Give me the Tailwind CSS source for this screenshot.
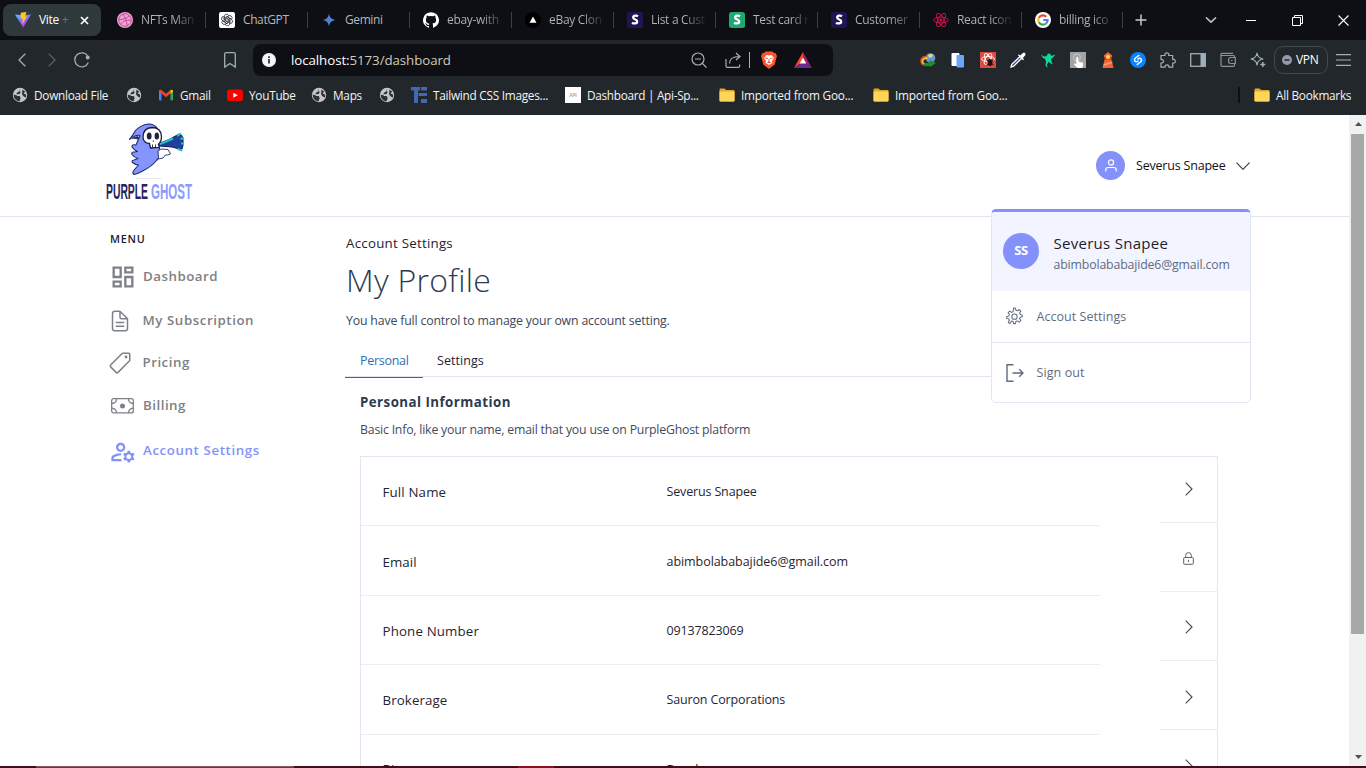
<!DOCTYPE html>
<html lang="en">
<head>
<meta charset="utf-8">
<title>Account Settings - Purple Ghost</title>
<script src="https://cdn.jsdelivr.net/npm/@tailwindcss/browser@4"></script>
</head>
<body class="h-[768px] w-[1366px] overflow-hidden bg-white font-['Open_Sans',sans-serif] text-black">
<svg class="hidden">
  <symbol id="globe" viewBox="0 0 16 16"><circle cx="8" cy="8" r="7.2" fill="#c3c7cb"/><path d="M8.300 1.500L7 3.800l1.800 1.200-1.200 2-3.300.3.400 1.600 3 .2 1 2.200-1.300 3.200C3.600 13.600 1.600 10.800 1.700 7.500L4 8.300l1-2.500 2.300-1.500zM10.500 2.500l2.800 2.300-1.800 1.400 2.700 1.600-.2 2.600-2.300-.9-1.700-2.300z" fill="#2b3135"/></symbol>
  <symbol id="folder" viewBox="0 0 16 16"><path d="M.5 2.700Q.5 1.500 1.700 1.500H5.500L7 3h7.500q1 0 1 1V13.500q0 1-1 1h-13q-1 0-1-1z" fill="#e3a92c"/><path d="M.5 4.500h15v9q0 1-1 1h-13q-1 0-1-1z" fill="#ffd659"/></symbol>
  <symbol id="stripe" viewBox="0 0 16 16"><rect width="16" height="16" rx="2.500" fill="currentColor"/><path d="M11 4.200C9.800 3.500 6.200 3.200 6.200 5.500c0 2.400 4 1.700 4 3.900 0 2.600-3.800 2.200-5.200 1.300" fill="none" stroke="#fff" stroke-width="2.300"/></symbol>
  <symbol id="chev" viewBox="0 0 8 14"><path d="M.7.700L7 7 .7 13.300" fill="none" stroke="#454b57" stroke-width="1.150"/></symbol>
</svg>

<!-- Tab strip -->
<div class="flex h-10 items-center bg-[#0e0f14] text-[12px] leading-4 tracking-[-0.3px] text-[#b4b7ba]">
  <div class="ml-[3px] flex h-8 w-[98px] items-center rounded-lg bg-[#2f383b] pl-3 text-white">
    <svg class="size-4 shrink-0" viewBox="0 0 16 16"><defs><linearGradient id="v1" x1="0" y1="0" x2=".6" y2="1"><stop offset="0" stop-color="#41d1ff"/><stop offset=".5" stop-color="#8a6cff"/><stop offset="1" stop-color="#bd34fe"/></linearGradient></defs><path d="M0 2.500l7.200.8L16 2.500 8.200 15.500z" fill="url(#v1)"/><path d="M5.800.8L11.500 0 10 4.500h2L7.500 12V6.500H5.500z" fill="#ffc81f"/></svg>
    <span class="ml-2 w-[31px] whitespace-nowrap">Vite <span class="text-[#687276]">+</span></span>
    <svg class="ml-[10px] size-[9px]" viewBox="0 0 9 9"><path d="M1 1l7 7M8 1L1 8" stroke="#fff" stroke-width="1.700"/></svg>
  </div>
  <div class="ml-4 flex w-[89px] items-center border-r border-[#3a4145]"><svg class="size-4 shrink-0" viewBox="0 0 16 16"><circle cx="8" cy="8" r="8" fill="#f2a1d4"/><g fill="none" stroke="#b4478c" stroke-width=".9"><circle cx="8" cy="8" r="6.300"/><path d="M2 7.500C6 7.500 10 6.500 12.500 3.700M5.800 2.200C8.500 5.500 9.500 9 10.200 13.800M3.800 12.500C5.500 9 9 7.500 14 8.500"/></g></svg><span class="ml-2 w-[56px] bg-gradient-to-r from-[#b4b7ba] from-60% to-[#14161b] bg-clip-text whitespace-nowrap text-transparent">NFTs Man</span></div>
  <div class="ml-[13px] flex w-[89px] items-center border-r border-[#3a4145]"><svg class="size-4 shrink-0" viewBox="0 0 16 16"><rect width="16" height="16" rx="2" fill="#fff"/><g fill="none" stroke="#222" stroke-width=".75"><path id="gp" d="M5.200 8.300V4.700A2.400 2.400 0 0 1 9.500 3.200M6.700 8.800V5.500L9.900 3.700"/><use href="#gp" transform="rotate(60 8 8)"/><use href="#gp" transform="rotate(120 8 8)"/><use href="#gp" transform="rotate(180 8 8)"/><use href="#gp" transform="rotate(240 8 8)"/><use href="#gp" transform="rotate(300 8 8)"/></g></svg><span class="ml-2 tracking-[-0.4px]">ChatGPT</span></div>
  <div class="ml-[13px] flex w-[89px] items-center border-r border-[#3a4145]"><svg class="size-4 shrink-0" viewBox="0 0 16 16"><defs><linearGradient id="gm"><stop offset=".1" stop-color="#8a6aa8"/><stop offset=".5" stop-color="#4a7fdc"/><stop offset="1" stop-color="#3aa0f5"/></linearGradient></defs><path d="M8 1.500C8.600 5.500 10.500 7.400 14.500 8 10.500 8.600 8.600 10.500 8 14.500 7.400 10.500 5.500 8.600 1.500 8 5.500 7.400 7.400 5.500 8 1.500z" fill="url(#gm)"/></svg><span class="ml-2 tracking-[-0.4px]">Gemini</span></div>
  <div class="ml-[13px] flex w-[89px] items-center border-r border-[#3a4145]"><svg class="size-4 shrink-0" viewBox="0 0 16 16"><path fill="#fff" d="M8 .2a8 8 0 0 0-2.500 15.600c.4.100.5-.2.500-.4v-1.400c-2.200.5-2.700-1-2.700-1-.4-.9-.9-1.200-.9-1.200-.7-.5.1-.5.1-.5.800.1 1.200.800 1.200.800.700 1.200 1.900.9 2.300.7.100-.5.300-.9.500-1.100-1.800-.2-3.600-.9-3.600-3.900 0-.9.3-1.600.8-2.200-.1-.2-.4-1 .1-2.100 0 0 .7-.2 2.200.8a7.700 7.700 0 0 1 4 0c1.500-1 2.200-.8 2.200-.8.400 1.100.2 1.900.1 2.100.5.600.8 1.300.8 2.200 0 3-1.900 3.700-3.700 3.900.3.300.6.800.6 1.500v2.200c0 .2.100.5.500.4A8 8 0 0 0 8 .2z"/></svg><span class="ml-2 w-[56px] bg-gradient-to-r from-[#b4b7ba] from-60% to-[#2a2c30] bg-clip-text whitespace-nowrap text-transparent">ebay-with</span></div>
  <div class="ml-[13px] flex w-[89px] items-center border-r border-[#3a4145]"><svg class="size-4 shrink-0" viewBox="0 0 16 16"><circle cx="8" cy="8" r="8" fill="#000"/><path d="M8 4.500l3.500 6.300h-7z" fill="#fff"/></svg><span class="ml-2 w-[56px] bg-gradient-to-r from-[#b4b7ba] from-60% to-[#14161b] bg-clip-text whitespace-nowrap text-transparent">eBay Clon</span></div>
  <div class="ml-[13px] flex w-[89px] items-center border-r border-[#3a4145]"><svg class="size-4 shrink-0 text-[#211551]"><use href="#stripe"/></svg><span class="ml-2 w-[56px] bg-gradient-to-r from-[#b4b7ba] from-60% to-[#14161b] bg-clip-text whitespace-nowrap text-transparent">List a Cust</span></div>
  <div class="ml-[13px] flex w-[89px] items-center border-r border-[#3a4145]"><svg class="size-4 shrink-0 text-[#21a772]"><use href="#stripe"/></svg><span class="ml-2 w-[56px] bg-gradient-to-r from-[#b4b7ba] from-70% to-[#14161b] bg-clip-text whitespace-nowrap text-transparent">Test card r</span></div>
  <div class="ml-[13px] flex w-[89px] items-center border-r border-[#3a4145]"><svg class="size-4 shrink-0 text-[#211551]"><use href="#stripe"/></svg><span class="ml-2 w-[56px] bg-gradient-to-r from-[#b4b7ba] from-60% to-[#3a3c40] bg-clip-text whitespace-nowrap text-transparent">Customer</span></div>
  <div class="ml-[13px] flex w-[89px] items-center border-r border-[#3a4145]"><svg class="size-4 shrink-0" viewBox="0 0 16 16"><g fill="none" stroke="#d0124f" stroke-width=".9"><ellipse cx="8" cy="8" rx="7.300" ry="2.900"/><ellipse cx="8" cy="8" rx="7.300" ry="2.900" transform="rotate(60 8 8)"/><ellipse cx="8" cy="8" rx="7.300" ry="2.900" transform="rotate(120 8 8)"/></g><circle cx="8" cy="8" r="1.500" fill="#d0124f"/></svg><span class="ml-2 w-[56px] bg-gradient-to-r from-[#b4b7ba] from-60% to-[#14161b] bg-clip-text whitespace-nowrap text-transparent">React icon</span></div>
  <div class="ml-[13px] flex w-[88px] items-center border-r border-[#3a4145]"><svg class="size-4 shrink-0" viewBox="0 0 16 16"><circle cx="8" cy="8" r="8" fill="#fff"/><g fill="none" stroke-width="2.200"><path d="M11.300 4.700A4.700 4.700 0 0 0 3.900 5.700" stroke="#ea4335"/><path d="M3.900 5.700a4.700 4.700 0 0 0 0 4.600" stroke="#fbbc05"/><path d="M3.900 10.300a4.700 4.700 0 0 0 7.200 1.200" stroke="#34a853"/><path d="M8.200 8H12.600a4.700 4.700 0 0 1-1.500 3.500" stroke="#4285f4"/></g></svg><span class="ml-2 w-[56px] bg-gradient-to-r from-[#b4b7ba] from-60% to-[#14161b] bg-clip-text whitespace-nowrap text-transparent">billing ico</span></div>
  <svg class="ml-[12px] size-3" viewBox="0 0 12 12"><path d="M6 .5v11M.5 6h11" stroke="#c7c9cb" stroke-width="1.500"/></svg>
  <svg class="ml-[58px] h-[6px] w-[12px]" viewBox="0 0 12 6"><path d="M1 .5l5 4.700 5-4.700" fill="none" stroke="#b7c4cb" stroke-width="1.600"/></svg>
  <div class="ml-[29px] h-px w-[10px] bg-white"></div>
  <svg class="ml-[36px] size-[11px]" viewBox="0 0 11 11"><path d="M.5 2.500h8v8h-8zM2.500 2.500v-2h8v8h-2" fill="none" stroke="#fff"/></svg>
  <svg class="ml-[35px] size-[11px]" viewBox="0 0 11 11"><path d="M.5.500l10 10M10.500.500l-10 10" stroke="#fff" stroke-width="1.100"/></svg>
</div>

<!-- Toolbar -->
<div class="flex h-10 items-center bg-[#22272b]">
  <svg class="ml-[18px] h-[14px] w-2" viewBox="0 0 8 14"><path d="M7.300.700L1 7l6.300 6.300" fill="none" stroke="#9fb0b8" stroke-width="1.300"/></svg>
  <svg class="ml-[22px] h-[14px] w-2" viewBox="0 0 8 14"><path d="M.7.700L7 7 .7 13.300" fill="none" stroke="#566167" stroke-width="1.300"/></svg>
  <svg class="ml-[18px] size-4" viewBox="0 0 16 16"><path d="M14.300 10.500A7 7 0 1 1 14 4.500" fill="none" stroke="#9fb0b8" stroke-width="1.300"/><circle cx="13.700" cy="5.500" r="2" fill="#9fb0b8"/></svg>
  <svg class="ml-[134px] h-4 w-3" viewBox="0 0 12 16"><path d="M.7 2.200Q.7.700 2.200.700h7.600q1.500 0 1.500 1.500v12.900L6 11.500.7 15.100z" fill="none" stroke="#9fb0b8" stroke-width="1.300"/></svg>
  <div class="ml-[17px] flex h-8 w-[580px] items-center rounded-lg bg-[#0e0f14] pl-[9px]">
    <svg class="size-[14px]" viewBox="0 0 14 14"><circle cx="7" cy="7" r="7" fill="#f4f5f6"/><path d="M7 6v4.500M7 3.300v1.600" stroke="#1b1d21" stroke-width="1.600"/></svg>
    <span class="ml-[15px] w-[390px] pt-[2px] text-[13.3px] tracking-[-0.07px] text-[#d0c9b8]"><span class="text-white">localhost:</span>5173/dashboard</span>
    <svg class="ml-[10px] size-4" viewBox="0 0 16 16"><g fill="none" stroke="#a9b0b4" stroke-width="1.200"><circle cx="7" cy="7" r="6"/><path d="M4 7h6M11.300 11.300L15.500 15.500"/></g></svg>
    <svg class="ml-[18px] size-4" viewBox="0 0 16 16"><g fill="none" stroke="#a9b0b4" stroke-width="1.200"><path d="M1 7v7q0 1.300 1.300 1.300h11q1.300 0 1.300-1.300v-1.500M4.500 11.500C4.500 6.500 8 4.500 14.500 4.500M11 1l4 3.500L11 8"/></g></svg>
    <div class="ml-2 h-4 w-px bg-[#a9b0b4]"></div>
    <svg class="ml-[11px] h-[18px] w-4" viewBox="0 0 16 18"><path d="M4.500.500h7L13 2h1.500L16 5l-.5 1.500-1.800 7L8 18l-5.700-4.500-1.800-7L0 5l1.500-3H3z" fill="#fb542b"/><path d="M8 4.500L5.500 4 3 7l2 3-.3 2L8 14l3.300-2-.3-2 2-3-2.500-3z" fill="#fff"/><path d="M4.500 7l2.300.7M11.500 7l-2.300.7M8 8v2.800M6.300 11.800L8 10.800l1.700 1" stroke="#fb542b" stroke-width="1"/></svg>
    <svg class="ml-[17px] h-[16px] w-[18px]" viewBox="0 0 18 16"><path d="M9 0L0 16l9-6.500z" fill="#ff4724"/><path d="M9 0l9 16-9-6.500z" fill="#9e1f63"/><path d="M0 16h18L9 9.500z" fill="#662d91"/><path d="M9 5.500l3.300 6H5.700z" fill="#fff"/></svg>
  </div>
  <svg class="ml-[87px] size-4" viewBox="0 0 16 16"><circle cx="10.500" cy="6" r="4.800" fill="#6d93cf"/><path d="M8 3q3-2 5 0l-1 2-3 1z" fill="#cfdf8e"/><path d="M6.500 4.500Q1 4.500 1 9t5 4" stroke="#e8482c" stroke-width="1.600" fill="none"/><path d="M7.500 6Q3 6 2.500 9T7 12.500" stroke="#f2c81f" stroke-width="1.800" fill="none"/><path d="M3.500 13q3 2 6.500.800l-.5 1.700L16 11l-6.500-3 .5 2.300Q7 12 4.500 10.500z" fill="#1b8f22"/></svg>
  <svg class="ml-[14px] size-4" viewBox="0 0 16 16"><rect x="1.500" y="1" width="8" height="13" rx="1" fill="#fff"/><rect x="6.500" y="3" width="7.500" height="12.500" rx="1" fill="#6aa6f5"/></svg>
  <svg class="ml-[14px] size-4" viewBox="0 0 16 16"><rect width="16" height="16" fill="#dd4b3e"/><g fill="none" stroke="#fff" stroke-width=".9"><ellipse cx="8" cy="7" rx="6.500" ry="2.500"/><ellipse cx="8" cy="7" rx="6" ry="2.500" transform="rotate(60 8 7)"/><ellipse cx="8" cy="7" rx="6" ry="2.500" transform="rotate(120 8 7)"/></g><ellipse cx="10" cy="10.500" rx="2.500" ry="3.500" fill="#25100f"/><path d="M6.500 8l7 5M13.500 8l-7 5" stroke="#25100f"/></svg>
  <svg class="ml-[14px] size-4" viewBox="0 0 16 16"><path d="M10 4.500L1.800 12.300 1 15l2.700-.8L11.700 6.300" fill="#2f4d9e" stroke="#fff" stroke-width="1.300"/><path d="M8 3.200l5 5 1-1-1.200-1.300 2.500-2.600Q16 2 15 1t-2.300.2L10.200 3.500 9 2.300z" fill="#fff"/></svg>
  <svg class="ml-[14px] size-4" viewBox="0 0 16 16"><path d="M1 2.500l3 2 2.500-.2L8 1.500l2.500.5.500 2 4.300-1.500-2.800 3.700-1.500.3.500 3 1.500 3-2.500-1.300L8.500 10 7 12.500 7.500 16 5.500 13.500 6 9.500 5 6.700 3 6z" fill="#0fd8a0"/></svg>
  <svg class="ml-[14px] size-4" viewBox="0 0 16 16"><rect width="16" height="16" fill="#a3a3a3"/><circle cx="7" cy="5.500" r="3.500" fill="none" stroke="#c9c9c9"/><path d="M6.300 5.500q1-1.300 2 0v4l4.700 1.200V14l-1 2H7.500L4 12.500 4.500 11.300l1.800 1z" fill="#fff"/></svg>
  <svg class="ml-[14px] size-4" viewBox="0 0 16 16"><path d="M8 0l4 3.200V5H4V3.200zM4.500 8h7l2 8h-11z" fill="#f4623a"/><path d="M4.500 5h7v3h-7z" fill="#e04a26"/><circle cx="8" cy="5" r="2" fill="#ffe24b"/><path d="M3.700 12l8.500-2.500.3 1.500-9 3z" fill="#ff9a78"/></svg>
  <svg class="ml-[14px] size-4" viewBox="0 0 16 16"><circle cx="8" cy="8" r="8" fill="#0a84ff"/><path d="M8.800 3.500L5.500 6q-2 2 0 3.500 1.200.8 2.500-.5M7.200 12.500l3.300-2.500q2-2 0-3.500Q9.300 5.700 8 7" fill="none" stroke="#fff" stroke-width="1.500" stroke-linecap="round"/></svg>
  <svg class="ml-[14px] size-4" viewBox="0 0 16 16"><path d="M1 3.500h4Q4.500.800 6.800.800T8.700 3.500h4v4Q15.300 7 15.300 9.200t-2.600 1.900v4H9Q9 12.800 7 12.800t-2 2.300H1v-4q2.500 0 2.500-1.900T1 7.300z" fill="none" stroke="#9fb0b8" stroke-width="1.200"/></svg>
  <svg class="ml-[14px] size-4" viewBox="0 0 16 16"><rect x=".7" y="1.700" width="14.600" height="12.600" fill="none" stroke="#9fb0b8" stroke-width="1.300"/><path d="M10.500 2h4.500v12h-4.500z" fill="#9fb0b8"/></svg>
  <svg class="ml-[14px] size-4" viewBox="0 0 16 16"><path d="M14.500 5.500V4.500q0-1-1-1h-11q-1.500 0-1.500-1.200T2.500 1.300h10.500M1 2.500v10.500q0 1.300 1.300 1.300h11q1.200 0 1.200-1.300v-1.500M15.300 5.500H10.500q-2 0-2 3t2 3h4.800zM11 8.500h1.500" fill="none" stroke="#84959c" stroke-width="1.200"/></svg>
  <svg class="ml-[14px] size-4" viewBox="0 0 16 16"><path d="M7 1q.5 5 6 6-5.500 1-6 6Q6.500 8 1 7 6.500 6 7 1z" fill="none" stroke="#9fb0b8" stroke-width="1.200" stroke-linejoin="round"/><path d="M12.800 10v5M10.300 12.500h5" stroke="#9fb0b8" stroke-width="1.500"/></svg>
  <div class="ml-2 flex h-7 w-[54px] items-center rounded-[9px] border border-[#40494e] pl-[7px] text-[12px] text-white">
    <svg class="mr-1 size-[10px]" viewBox="0 0 10 10"><circle cx="5" cy="5" r="5" fill="#9797ac"/><path d="M2.500 5h5" stroke="#22272b" stroke-width="1.500"/></svg><span class="tracking-[-0.3px]">VPN</span>
  </div>
  <svg class="ml-[8px] h-3 w-[15px]" viewBox="0 0 15 12"><path d="M0 .7h15M0 6h15M0 11.300h15" stroke="#9fb0b8" stroke-width="1.200"/></svg>
</div>

<!-- Bookmarks -->
<div class="flex h-[35px] items-center bg-[#22272b] pb-[5px] text-[11.8px] leading-4 tracking-[-0.26px] whitespace-nowrap text-[#f3f4f5]">
  <svg class="ml-3 size-4"><use href="#globe"/></svg><span class="ml-[6px] w-[92px]">Download File</span>
  <svg class="size-4"><use href="#globe"/></svg>
  <svg class="ml-4 size-4" viewBox="0 0 16 16"><path d="M1 3h2.500v10.500H2q-1 0-1-1z" fill="#4285f4"/><path d="M12.500 3H15v9.500q0 1-1 1h-1.500z" fill="#34a853"/><path d="M1 4.500Q1 2.500 3 2.800L8 6.700l4.500-3.600v3.500L8 10.200 3.500 6.600 1 5z" fill="#ea4335"/><path d="M12.500 3.100Q15 2 15 4.500V5l-2.500 2z" fill="#fbbc04"/></svg><span class="ml-[6px] w-[47px]">Gmail</span>
  <svg class="size-4" viewBox="0 0 16 16"><rect y="2.500" width="16" height="11.500" rx="2.800" fill="#f00"/><path d="M6.300 5.700l4.500 2.500-4.500 2.500z" fill="#fff"/></svg><span class="ml-[6px] w-[62px]">YouTube</span>
  <svg class="size-4"><use href="#globe"/></svg><span class="ml-[6px] w-[46px]">Maps</span>
  <svg class="size-4"><use href="#globe"/></svg>
  <svg class="ml-4 size-4" viewBox="0 0 16 16"><path d="M0 0h9v3.500H7V16H3V3.500H0zM10 0h6v3.500h-6zM10 6h6v3h-6zM7.500 6H10v3H7.500zM10 12h6v4h-6z" fill="#4068b4"/></svg><span class="ml-[6px] w-[132px]">Tailwind CSS Images...</span>
  <span class="flex size-4 items-center justify-center bg-white text-[5px] font-bold text-[#b5aaa6]">API</span><span class="ml-[6px] w-[132px] tracking-[-0.3px]">Dashboard | Api-Sp...</span>
  <svg class="size-4"><use href="#folder"/></svg><span class="ml-[6px] w-[132px] tracking-[-0.2px]">Imported from Goo...</span>
  <svg class="size-4"><use href="#folder"/></svg><span class="ml-[6px] w-[132px] tracking-[-0.2px]">Imported from Goo...</span>
  <div class="ml-[211px] h-4 w-[2px] bg-[#0e0f14]"></div>
  <svg class="ml-[14px] size-4"><use href="#folder"/></svg><span class="ml-[6px]">All Bookmarks</span>
</div>

<!-- Page viewport -->
<div class="flex h-[651px] overflow-hidden">
  <div class="relative h-full w-[1349px] overflow-hidden">
    <header class="flex h-[102px] items-center border-b border-[#e2e4f0] pl-[105px]">
      <svg class="mb-[8px] h-20 w-[88px]" viewBox="105 122 88 80">
        <path d="M129.500 139.500q3-4 6-9 5-5.500 13-6.500 6 0 9 4.500l1 17 2 6q0 5-4 9-5 6-13 10-6 3.500-9.500 4-2.500-1.500.5-5l4-4.500q-3 0-6-2.500-1.500-2 1.500-2.500l4-1.500q-4-1-6-4-1-3 2.500-2.500l3-.5q-4-2-5.500-4.500-.5-3 4-2l4-9.500q-4-1-10.500 3.500z" fill="#8495ff" stroke="#232a68" stroke-width="1.100" stroke-linejoin="round"/>
        <path d="M129.500 139.500q4-3 8-3.500l2 1.500-1.500 2q-4-1.500-8.500 0z" fill="#2a3272"/>
        <path d="M158 151l3-2 7 .5 2.500 4.500q-3 1.500-5 1l-2.500 3-4.500 1z" fill="#fff" stroke="#232a68" stroke-width=".9"/>
        <path d="M143 137.500q0-9.500 9-10 9 0 9.500 9 0 4.500-2 7l-.5 4-8.500.5-1-4.500q-6-.5-6.500-6z" fill="#fff" stroke="#1c1c3c" stroke-width="1.300"/>
        <ellipse cx="149.200" cy="136" rx="2.400" ry="3.500" fill="#23203f"/><ellipse cx="156.800" cy="136" rx="2.200" ry="3.500" fill="#23203f"/><path d="M153.300 140.500v1.500M152.500 144.500v3M155.500 144.500v3" stroke="#23203f" stroke-width=".9"/>
        <path d="M158 144l12-5 9-5q3-1 4 6 .5 6-1 9-4 0-10-2l-13-1z" fill="#20409a" stroke="#131b55"/>
        <path d="M160 144.200l13-5.700M177 136l4-2.500M180.500 139l3.500-1M181 143.500h3M177.500 149l5 1.500" stroke="#27c3cb" stroke-width="2"/>
        <ellipse cx="149" cy="178.500" rx="14" ry=".6" fill="#e6e6ea"/>
        <text x="106" y="199" font-family="Liberation Sans Narrow, Liberation Sans, sans-serif" font-size="21.500" font-weight="700" fill="#28235e" textLength="42" lengthAdjust="spacingAndGlyphs">PURPLE</text>
        <text x="151" y="199" font-family="Liberation Sans Narrow, Liberation Sans, sans-serif" font-size="21.500" font-weight="700" fill="#8b9aff" textLength="41" lengthAdjust="spacingAndGlyphs">GHOST</text>
      </svg>
      <div class="ml-[903px] flex items-center">
        <div class="flex size-[29px] items-center justify-center rounded-full bg-[#8591fb]"><svg class="size-[13px]" viewBox="0 0 13 13"><g fill="none" stroke="#fff" stroke-width="1.200"><circle cx="7" cy="3.500" r="2.600"/><path d="M1.700 12.500v-1.500q0-2.500 2.500-2.500h5.600q2.500 0 2.500 2.500v1.500"/></g></svg></div>
        <span class="ml-[11px] w-[100px] pt-[2px] text-[12.5px] font-medium tracking-[-0.2px] whitespace-nowrap text-[#101016]">Severus Snapee</span>
        <svg class="h-2 w-[14px]" viewBox="0 0 14 8"><path d="M.5.700L7 7.300 13.500.700" fill="none" stroke="#33343c" stroke-width="1.100"/></svg>
      </div>
    </header>

    <div class="flex">
      <nav class="w-[345px] pl-[110px] text-[13.3px] leading-5 font-semibold tracking-[0.5px] text-[#7d8086]">
        <div class="mt-3 h-5 text-[10.8px] tracking-[0.8px] text-[#1c2030]">MENU</div>
        <div class="mt-[14px] flex h-7 items-center"><svg class="-ml-[1.500px] size-[28px]" viewBox="0 0 24 24"><path fill="currentColor" d="M19 5v2h-4V5h4M9 5v6H5V5h4m10 8v6h-4v-6h4M9 17v2H5v-2h4M21 3h-8v6h8V3zM11 3H3v10h8V3zm10 8h-8v10h8V11zm-10 4H3v6h8v-6z"/></svg><span class="-mt-[2px] ml-[6.500px]">Dashboard</span></div>
        <div class="mt-[18px] flex h-6 items-center"><svg class="-ml-[2px] size-6" viewBox="0 0 512 512"><path fill="none" stroke="currentColor" stroke-width="32" stroke-linejoin="round" stroke-linecap="round" d="M416 221.250V416a48 48 0 01-48 48H144a48 48 0 01-48-48V96a48 48 0 0148-48h98.750a32 32 0 0122.620 9.370l141.260 141.260a32 32 0 019.370 22.620zM256 56v120a32 32 0 0032 32h120M176 288h160M176 368h160"/></svg><span class="-mt-[2px] ml-[10.500px] tracking-[0.56px]">My Subscription</span></div>
        <div class="mt-[18px] flex h-6 items-center"><svg class="-ml-[2px] size-6" viewBox="0 0 512 512"><path fill="none" stroke="currentColor" stroke-width="32" stroke-linejoin="round" d="M435.250 48h-122.900a14.460 14.460 0 00-10.200 4.200L56.450 297.900a28.850 28.850 0 000 40.700l117 117a28.850 28.850 0 0040.700 0L459.750 210a14.460 14.460 0 004.200-10.200v-123a28.660 28.660 0 00-28.700-28.800z"/><circle cx="384" cy="128" r="30" fill="currentColor"/></svg><span class="-mt-[2px] ml-[10.500px]">Pricing</span></div>
        <div class="mt-[19px] flex h-6 items-center"><svg class="ml-px h-4 w-[23px]" viewBox="0 0 23 16"><g fill="none" stroke="currentColor" stroke-width="1.300"><rect x=".7" y=".7" width="21.600" height="14.200" rx="2"/><path d="M.7 5.500Q5.500 5 5.500.700M22.300 5.500Q17.500 5 17.500.700M.7 10.200Q5.500 10.700 5.500 15M22.300 10.200Q17.500 10.700 17.500 15"/></g><circle cx="11.500" cy="7.900" r="2.500" fill="currentColor"/></svg><span class="-mt-[2px] ml-[9px]">Billing</span></div>
        <div class="mt-[20px] flex h-7 items-center text-[#8591fb]"><svg class="-ml-[1.500px] size-[28px]" viewBox="0 0 24 24"><path fill="currentColor" fill-rule="evenodd" d="M4 18v-.65c0-.34.16-.66.41-.81C6.100 15.530 8.030 15 10 15c.03 0 .05 0 .08.010.1-.7.3-1.370.59-1.980-.22-.02-.44-.03-.67-.03-2.420 0-4.680.67-6.610 1.820-.88.520-1.390 1.500-1.390 2.530V20h9.260c-.42-.6-.75-1.280-.97-2H4zM10 12c2.210 0 4-1.790 4-4s-1.790-4-4-4-4 1.790-4 4 1.790 4 4 4zM10 6c1.100 0 2 .9 2 2s-.9 2-2 2-2-.9-2-2 .9-2 2-2zM20.750 16c0-.22-.03-.42-.06-.63l1.140-1.010-1-1.730-1.450.49c-.32-.27-.68-.48-1.080-.63L18 11h-2l-.3 1.490c-.4.150-.76.360-1.080.630l-1.450-.49-1 1.730 1.140 1.010c-.03.210-.06.410-.06.630s.03.420.06.630l-1.140 1.010 1 1.730 1.450-.49c.32.270.68.480 1.080.63L16 21h2l.3-1.490c.4-.15.76-.36 1.080-.63l1.450.49 1-1.730-1.140-1.010c.03-.21.06-.41.06-.63zM17 18c-1.100 0-2-.9-2-2s.9-2 2-2 2 .9 2 2-.9 2-2 2z"/></svg><span class="-mt-[4px] ml-[6.500px] tracking-[0.6px]">Account Settings</span></div>
      </nav>

      <main class="w-[906px] whitespace-nowrap">
        <div class="mt-4 h-5 pl-px text-[13.3px] leading-5 tracking-[0.25px] text-[#1d2333]">Account Settings</div>
        <h1 class="mt-[7px] h-10 pl-px text-[32px] leading-10 font-light tracking-[0.3px] text-[#2d3a50]">My Profile</h1>
        <p class="mt-[11px] h-5 pl-px text-[12.3px] leading-5 tracking-[-0.16px] text-[#3b475a]">You have full control to manage your own account setting.</p>
        <div class="mt-[15px] flex h-[31px] border-b border-[#e2e4f0] text-[12.5px] leading-[30px] font-medium">
          <div class="h-8 w-[78px] border-b border-[#2b6cb0] pl-[15px] tracking-[-0.28px] text-[#2f6fb3]">Personal</div>
          <div class="pl-[14px] tracking-[0.05px] text-[#1d2333]">Settings</div>
        </div>
        <h2 class="mt-[15px] ml-[15px] h-5 text-[13.3px] leading-5 font-bold tracking-[0.45px] text-[#2d3a50]">Personal Information</h2>
        <p class="mt-[8px] ml-[15px] h-5 text-[12.3px] leading-5 tracking-[-0.2px] text-[#3f4b5e]">Basic Info, like your name, email that you use on PurpleGhost platform</p>
        <div class="mt-[16px] ml-[15px] flex h-[320px] w-[858px] justify-between border border-b-0 border-[#e2e6f0] text-[#1f2533]">
          <div class="w-[739px] text-[12.5px] font-medium tracking-[-0.15px]">
            <div class="flex h-[69px] items-center border-b border-[#e9eef5] pl-[21.500px]"><span class="w-[284px] pt-[4px] text-[13.3px] font-normal tracking-[0.15px]">Full Name</span><span class="pt-[3px]">Severus Snapee</span></div>
            <div class="flex h-[70px] items-center border-b border-[#e9eef5] pl-[21.500px]"><span class="w-[284px] pt-[4px] text-[13.3px] font-normal tracking-[0.05px]">Email</span><span class="pt-[3px] tracking-[-0.06px]">abimbolababajide6@gmail.com</span></div>
            <div class="flex h-[69px] items-center border-b border-[#e9eef5] pl-[21.500px]"><span class="w-[284px] pt-[4px] text-[13.3px] font-normal tracking-[0.15px]">Phone Number</span><span class="pt-[3px]">09137823069</span></div>
            <div class="flex h-[70px] items-center border-b border-[#e9eef5] pl-[21.500px]"><span class="w-[284px] pt-[2px] text-[13.3px] font-normal tracking-[0.1px]">Brokerage</span><span class="pt-px">Sauron Corporations</span></div>
            <div class="flex h-[69px] items-center pl-[21.500px]"><span class="w-[284px] text-[13.3px] font-normal">Bio</span><span class="pt-px">Developer</span></div>
          </div>
          <div class="w-[57px]">
            <div class="flex h-[66px] items-center justify-center border-b border-[#e9eef5]"><svg class="mb-px h-[14px] w-2"><use href="#chev"/></svg></div>
            <div class="flex h-[69px] items-center justify-center border-b border-[#e9eef5] pr-px"><svg class="mb-[-3px] h-[13px] w-[11px]" viewBox="0 0 11 13"><g fill="none" stroke="#5a5f69" stroke-width="1"><rect x=".7" y="5.500" width="9.600" height="6.800" rx=".8"/><path d="M2.700 5.300V3.300q0-2.700 2.800-2.700t2.800 2.700v2M5.500 7.800v2.200"/></g></svg></div>
            <div class="flex h-[69px] items-center justify-center border-b border-[#e9eef5] pt-[2px]"><svg class="h-[14px] w-2"><use href="#chev"/></svg></div>
            <div class="flex h-[69px] items-center justify-center border-b border-[#e9eef5] pt-[4px]"><svg class="h-[14px] w-2"><use href="#chev"/></svg></div>
            <div class="flex h-[69px] items-center justify-center pt-[3px]"><svg class="h-[14px] w-2"><use href="#chev"/></svg></div>
          </div>
        </div>
      </main>
    </div>

    <!-- Account menu -->
    <div class="absolute top-[94px] left-[991px] h-[194px] w-[260px] overflow-hidden rounded-[5px] border border-t-[3px] border-[#e2e6f0] border-t-[#8591fb] bg-white whitespace-nowrap">
      <div class="flex h-[79px] items-center bg-[#f2f4ff] pl-[11px]">
        <div class="mb-px flex size-9 shrink-0 items-center justify-center rounded-full bg-[#8591fb] text-[13px] font-bold tracking-[-0.3px] text-white">SS</div>
        <div class="ml-[14.500px] pt-[2px]">
          <div class="h-[22px] text-[15px] leading-[22px] font-medium tracking-[0.28px] text-[#1a1e2b]">Severus Snapee</div>
          <div class="h-5 text-[12.3px] leading-[21px] tracking-[-0.14px] text-[#5f6b80]">abimbolababajide6@gmail.com</div>
        </div>
      </div>
      <div class="flex h-[52px] items-center border-b border-[#e2e6f0] pl-[13px] text-[12.5px] font-medium tracking-[0.04px] text-[#5f6b80]">
        <svg class="size-[19px]" viewBox="0 0 24 24"><path d="M10.800 2h2.400l.5 2.600q1 .2 2 .8l2.300-1.600 2 2-1.600 2.300q.6 1 .8 2l2.600.5v2.400l-2.600.5q-.2 1-.8 2l1.600 2.300-2 2-2.300-1.600q-1 .6-2 .8l-.5 2.600h-2.400l-.5-2.600q-1-.2-2-.8L6 21.800l-2-2 1.600-2.300q-.6-1-.8-2L2.200 15v-2.400l2.600-.5q.2-1 .8-2L4 7.800l2-2 2.300 1.600q1-.6 2-.8z" transform="translate(0 -.6)" fill="none" stroke="currentColor" stroke-width="1.300" stroke-linejoin="round"/><circle cx="12" cy="12.200" r="3.400" fill="none" stroke="currentColor" stroke-width="1.300"/></svg>
        <span class="ml-[12.500px] pt-[2px]">Accout Settings</span>
      </div>
      <div class="flex h-[60px] items-center pl-[14px] text-[12.5px] font-medium tracking-[0.1px] text-[#5f6b80]">
        <svg class="size-[18px]" viewBox="0 0 18 18"><path d="M7.500.800H1v16.400h6.500M6.500 9H17M13.200 5.200L17 9l-3.800 3.800" fill="none" stroke="currentColor" stroke-width="1.400"/></svg>
        <span class="ml-[12.500px]">Sign out</span>
      </div>
    </div>
  </div>

  <!-- Scrollbar -->
  <div class="flex w-[17px] flex-col items-center bg-[#f1f1f1]">
    <svg class="mt-[7px] ml-px h-1 w-[7px]" viewBox="0 0 7 4"><path d="M0 4L3.500 0 7 4z" fill="#505050"/></svg>
    <div class="mt-2 h-[500px] w-[13px] bg-[#a8a8a8]"></div>
    <svg class="mt-[121px] ml-px h-1 w-[7px]" viewBox="0 0 7 4"><path d="M0 0L3.500 4 7 0z" fill="#505050"/></svg>
  </div>
</div>

<!-- Taskbar edge -->
<div class="flex h-[2px] bg-[#3f1017]"><div class="ml-9 w-[258px] border-t border-[#8a5a60] bg-[#6b3a40]"></div><div class="ml-[224px] w-9 bg-[#8f111f]"></div></div>
</body>
</html>
